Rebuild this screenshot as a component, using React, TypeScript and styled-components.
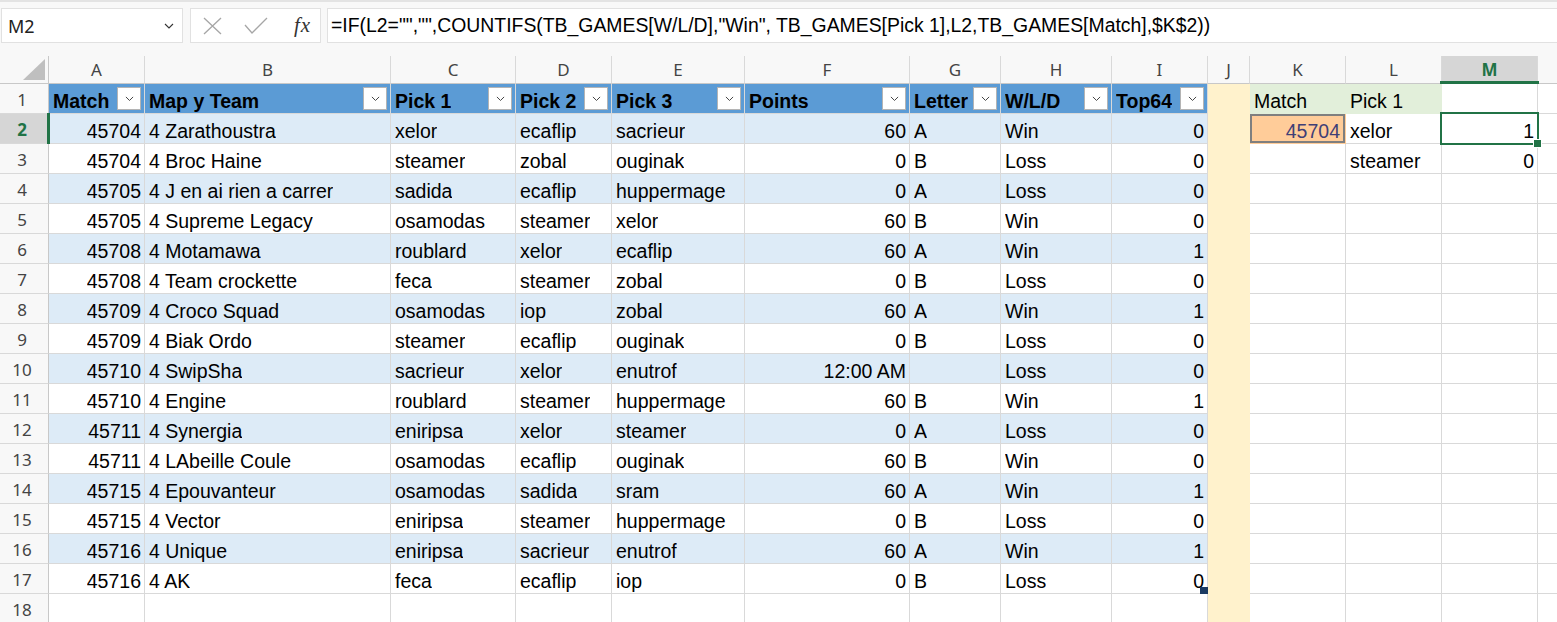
import styled, { createGlobalStyle } from "styled-components";

const GRID = "#d9d9d9";
const BAND = "#ddebf7";
const TABLE_HEAD = "#5b9bd5";
const GREEN = "#217346";
const CHROME = "#f8f8f8";

const GlobalStyle = createGlobalStyle`
  html, body {
    margin: 0;
    padding: 0;
    background: #fff;
    overflow: hidden;
  }
  body {
    font-family: "Liberation Sans", Arial, sans-serif;
    color: #000;
  }
`;

const Window = styled.div`
  width: 1557px;
  height: 622px;
  overflow: hidden;
  display: flex;
  flex-direction: column;
  background: #fff;
`;

const FormulaBar = styled.div`
  display: flex;
  align-items: stretch;
  height: 35px;
  padding: 6px 0 13px 1px;
  border-top: 2px solid #e3e3e3;
  background: ${CHROME};
  flex: none;
`;

const Box = styled.div`
  display: flex;
  align-items: center;
  background: #fff;
  border: 1px solid #e1e1e1;
  box-sizing: border-box;
  height: 35px;
`;

const NameBox = styled(Box)`
  width: 182px;
  padding: 0 8px 0 6px;
  justify-content: space-between;
  font-family: "Noto Sans", "Open Sans", sans-serif;
  font-size: 18px;
  color: #222;
`;

const FnBox = styled(Box)`
  width: 131px;
  margin-left: 7px;
  padding-left: 12px;
  gap: 22px;
`;

const FxLabel = styled.span`
  font-family: "Liberation Serif", "Times New Roman", serif;
  font-style: italic;
  font-size: 21px;
  color: #333;
  margin-left: 4px;
  letter-spacing: 1px;
`;

const FormulaBox = styled(Box)`
  flex: 1;
  margin-left: 6px;
  padding-left: 3px;
  font-size: 19.4px;
  color: #000;
  white-space: nowrap;
  border-right: none;
`;

const Sheet = styled.div`
  display: grid;
  grid-template-columns: 49px 96px 246px 125px 96px 133px 165px 91px 111px 96px 42px 96px 96px 96px 96px;
  grid-template-rows: 28px repeat(18, 30px);
  width: max-content;
  flex: none;
`;

const Corner = styled.div`
  display: flex;
  align-items: flex-end;
  justify-content: flex-end;
  padding: 0 3px 3px 0;
  background: ${CHROME};
  border-right: 1px solid #c8c8c8;
  border-bottom: 1px solid #c8c8c8;
`;

const ColHead = styled.div<{ $active?: boolean }>`
  position: relative;
  z-index: ${(p) => (p.$active ? 2 : 0)};
  display: flex;
  align-items: center;
  justify-content: center;
  background: ${(p) => (p.$active ? "#d6d6d6" : CHROME)};
  border-right: 1px solid ${GRID};
  border-bottom: 1px solid #c8c8c8;
  font-family: "Noto Sans", "Open Sans", sans-serif;
  font-size: 17px;
  font-weight: ${(p) => (p.$active ? 700 : 400)};
  color: ${(p) => (p.$active ? GREEN : "#444")};

  ${(p) =>
    p.$active &&
    `
    &::after {
      content: "";
      position: absolute;
      left: -2px;
      right: -2px;
      bottom: -1px;
      height: 3px;
      background: ${GREEN};
    }
  `}
`;

const RowHead = styled.div<{ $active?: boolean }>`
  position: relative;
  z-index: ${(p) => (p.$active ? 2 : 0)};
  display: flex;
  align-items: center;
  justify-content: center;
  padding: 2px 4px 0 0;
  background: ${(p) => (p.$active ? "#d6d6d6" : CHROME)};
  border-right: 1px solid #c8c8c8;
  border-bottom: 1px solid ${GRID};
  font-family: "Noto Sans", "Open Sans", sans-serif;
  font-size: 17px;
  font-weight: ${(p) => (p.$active ? 700 : 400)};
  color: ${(p) => (p.$active ? GREEN : "#444")};

  ${(p) =>
    p.$active &&
    `
    &::after {
      content: "";
      position: absolute;
      top: -1px;
      bottom: -1px;
      right: -2px;
      width: 3px;
      background: ${GREEN};
    }
  `}
`;

interface CellProps {
  $fill?: string;
  $right?: boolean;
  $bold?: boolean;
  $bare?: boolean;
  $color?: string;
  $framed?: boolean;
  $top?: boolean;
}

const Cell = styled.div<CellProps>`
  position: relative;
  z-index: ${(p) => (p.$top ? 3 : 0)};
  display: flex;
  align-items: center;
  justify-content: ${(p) => (p.$right ? "flex-end" : "flex-start")};
  min-width: 0;
  padding: 4px ${(p) => (p.$framed ? 5 : 3)}px 0 4px;
  background: ${(p) => p.$fill ?? "#fff"};
  border-right: 1px solid ${(p) => (p.$bare ? "transparent" : GRID)};
  border-bottom: 1px solid ${(p) => (p.$bare ? "transparent" : GRID)};
  box-shadow: ${(p) => (p.$framed ? "inset 0 0 0 2px #7f7f7f" : "none")};
  font-size: 19.5px;
  line-height: 22px;
  font-weight: ${(p) => (p.$bold ? 700 : 400)};
  color: ${(p) => p.$color ?? "#000"};
  white-space: nowrap;
`;

const Label = styled.span`
  overflow: hidden;
`;

const Filter = styled.div`
  margin-left: auto;
  margin-top: -4px;
  width: 24px;
  height: 23px;
  box-sizing: border-box;
  background: #fff;
  border: 1px solid #b4b4b4;
  display: flex;
  align-items: center;
  justify-content: center;
  flex: none;
`;

const Selection = styled.div`
  position: absolute;
  left: -2px;
  top: -2px;
  right: -2px;
  bottom: -2px;
  border: 2px solid ${GREEN};
  pointer-events: none;

  &::after {
    content: "";
    position: absolute;
    right: -5px;
    bottom: -5px;
    width: 7px;
    height: 7px;
    background: ${GREEN};
    border: 1px solid #fff;
  }
`;

const ResizeHandle = styled.div`
  position: absolute;
  right: -1px;
  bottom: -1px;
  width: 8px;
  height: 7px;
  background: #1c3b63;
`;

const COLS = ["A", "B", "C", "D", "E", "F", "G", "H", "I", "J", "K", "L", "M", ""];

const HEADERS = ["Match", "Map y Team", "Pick 1", "Pick 2", "Pick 3", "Points", "Letter", "W/L/D", "Top64"];
const RIGHT_COLS = new Set([0, 5, 8]);

const DATA: string[][] = [
  ["45704", "4 Zarathoustra", "xelor", "ecaflip", "sacrieur", "60", "A", "Win", "0"],
  ["45704", "4 Broc Haine", "steamer", "zobal", "ouginak", "0", "B", "Loss", "0"],
  ["45705", "4 J en ai rien a carrer", "sadida", "ecaflip", "huppermage", "0", "A", "Loss", "0"],
  ["45705", "4 Supreme Legacy", "osamodas", "steamer", "xelor", "60", "B", "Win", "0"],
  ["45708", "4 Motamawa", "roublard", "xelor", "ecaflip", "60", "A", "Win", "1"],
  ["45708", "4 Team crockette", "feca", "steamer", "zobal", "0", "B", "Loss", "0"],
  ["45709", "4 Croco Squad", "osamodas", "iop", "zobal", "60", "A", "Win", "1"],
  ["45709", "4 Biak Ordo", "steamer", "ecaflip", "ouginak", "0", "B", "Loss", "0"],
  ["45710", "4 SwipSha", "sacrieur", "xelor", "enutrof", "12:00 AM", "", "Loss", "0"],
  ["45710", "4 Engine", "roublard", "steamer", "huppermage", "60", "B", "Win", "1"],
  ["45711", "4 Synergia", "eniripsa", "xelor", "steamer", "0", "A", "Loss", "0"],
  ["45711", "4 LAbeille Coule", "osamodas", "ecaflip", "ouginak", "60", "B", "Win", "0"],
  ["45715", "4 Epouvanteur", "osamodas", "sadida", "sram", "60", "A", "Win", "1"],
  ["45715", "4 Vector", "eniripsa", "steamer", "huppermage", "0", "B", "Loss", "0"],
  ["45716", "4 Unique", "eniripsa", "sacrieur", "enutrof", "60", "A", "Win", "1"],
  ["45716", "4 AK", "feca", "ecaflip", "iop", "0", "B", "Loss", "0"],
];

const FORMULA = '=IF(L2="","",COUNTIFS(TB_GAMES[W/L/D],"Win", TB_GAMES[Pick 1],L2,TB_GAMES[Match],$K$2))';

function Chevron({ size = 9, color = "#444" }: { size?: number; color?: string }) {
  return (
    <svg width={size} height={size * 0.6} viewBox="0 0 10 6">
      <polyline points="1,1 5,5 9,1" fill="none" stroke={color} strokeWidth="1.1" />
    </svg>
  );
}

function renderCell(r: number, c: number) {
  const key = `${r}-${c}`;

  // table TB_GAMES, columns A..I
  if (c < 9) {
    if (r === 1) {
      return (
        <Cell key={key} $fill={TABLE_HEAD} $bold>
          <Label>{HEADERS[c]}</Label>
          <Filter>
            <Chevron />
          </Filter>
        </Cell>
      );
    }
    if (r <= 17) {
      const value = DATA[r - 2][c];
      return (
        <Cell key={key} $fill={r % 2 === 0 ? BAND : "#fff"} $right={RIGHT_COLS.has(c)} $top={r === 17 && c === 8}>
          <Label>{value}</Label>
          {r === 17 && c === 8 && <ResizeHandle />}
        </Cell>
      );
    }
    return <Cell key={key} />;
  }

  if (c === 9) return <Cell key={key} $fill="#fff2cc" $bare />;

  if (c === 10) {
    if (r === 1) return <Cell key={key} $fill="#e2efda" $bare>Match</Cell>;
    if (r === 2)
      return (
        <Cell key={key} $fill="#ffcc99" $bare $framed $right $color="#3f3f76">
          45704
        </Cell>
      );
  }

  if (c === 11) {
    if (r === 1) return <Cell key={key} $fill="#e2efda" $bare>Pick 1</Cell>;
    if (r === 2) return <Cell key={key}>xelor</Cell>;
    if (r === 3) return <Cell key={key}>steamer</Cell>;
  }

  if (c === 12) {
    if (r === 2)
      return (
        <Cell key={key} $right $top>
          1
          <Selection />
        </Cell>
      );
    if (r === 3) return <Cell key={key} $right>0</Cell>;
  }

  return <Cell key={key} />;
}

export default function App() {
  const rowNumbers = Array.from({ length: 18 }, (_, i) => i + 1);

  return (
    <Window>
      <GlobalStyle />
      <FormulaBar>
        <NameBox>
          <span>M2</span>
          <Chevron size={10} color="#333" />
        </NameBox>
        <FnBox>
          <svg width="19" height="18" viewBox="0 0 19 18">
            <path d="M1 1 L18 17 M18 1 L1 17" stroke="#a6a6a6" strokeWidth="1.3" fill="none" />
          </svg>
          <svg width="24" height="17" viewBox="0 0 24 17">
            <polyline points="1,8 8,16 23,1" stroke="#a6a6a6" strokeWidth="1.3" fill="none" />
          </svg>
          <FxLabel>fx</FxLabel>
        </FnBox>
        <FormulaBox>{FORMULA}</FormulaBox>
      </FormulaBar>

      <Sheet>
        <Corner>
          <svg width="22" height="21" viewBox="0 0 22 21">
            <polygon points="22,0 22,21 0,21" fill="#bfbfbf" />
          </svg>
        </Corner>
        {COLS.map((col, i) => (
          <ColHead key={`c${i}`} $active={col === "M"}>
            {col}
          </ColHead>
        ))}
        {rowNumbers.map((r) => [
          <RowHead key={`h${r}`} $active={r === 2}>
            {r}
          </RowHead>,
          ...COLS.map((_, c) => renderCell(r, c)),
        ])}
      </Sheet>
    </Window>
  );
}
